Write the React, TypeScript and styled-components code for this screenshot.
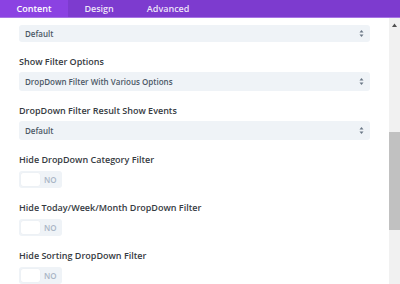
import styled, { createGlobalStyle } from 'styled-components';

const GlobalStyle = createGlobalStyle`
  html, body {
    margin: 0;
    padding: 0;
    background: #ffffff;
    font-family: "Open Sans", "Noto Sans", sans-serif;
  }
  #root {
    width: 400px;
    height: 284px;
    overflow: hidden;
  }
`;

const Frame = styled.div`
  display: flex;
  flex-direction: column;
  width: 400px;
  height: 284px;
`;

const TabBar = styled.div`
  display: flex;
  height: 17px;
  background-color: #7d3bcf;
  border-bottom: 1px solid #a774e4;
  flex-shrink: 0;
`;

const Tab = styled.div<{ $active?: boolean }>`
  display: flex;
  align-items: center;
  padding: 0 16.5px;
  font-size: 9px;
  font-weight: 600;
  color: ${({ $active }) => ($active ? '#ffffff' : 'rgba(255, 255, 255, 0.88)')};
  background-color: ${({ $active }) => ($active ? '#8b42e2' : 'transparent')};
`;

const Body = styled.div`
  display: flex;
  flex: 1;
  min-height: 0;
`;

const Panel = styled.div`
  flex: 1;
  display: flex;
  flex-direction: column;
  gap: 13px;
  padding: 7px 19px 0 19px;
`;

const Field = styled.div<{ $space: number }>`
  display: flex;
  flex-direction: column;
  gap: ${({ $space }) => $space}px;
`;

const Label = styled.div`
  font-size: 9px;
  font-weight: 600;
  line-height: 13px;
  color: #363b42;
  white-space: nowrap;
`;

const SelectBox = styled.div`
  display: flex;
  align-items: center;
  justify-content: space-between;
  height: 19px;
  padding: 0 6px 0 6px;
  background-color: #eff3f7;
  border-radius: 3px;
  font-size: 8px;
  font-weight: 600;
  color: #4c5866;
`;

const Toggle = styled.div`
  display: flex;
  align-items: center;
  gap: 4px;
  width: 43px;
  height: 17px;
  padding: 0 2px;
  box-sizing: border-box;
  background-color: #eff3f7;
  border-radius: 3px;
`;

const Knob = styled.div`
  width: 19px;
  height: 13px;
  background-color: #ffffff;
  border-radius: 2px;
  box-shadow: 0 0 1px rgba(0, 0, 0, 0.08);
`;

const ToggleText = styled.span`
  font-size: 8px;
  font-weight: 600;
  color: #a9b5c5;
`;

const ScrollBar = styled.div`
  width: 11px;
  background-color: #f1f1f1;
  display: flex;
  flex-direction: column;
  align-items: center;
  flex-shrink: 0;
`;

const ScrollArrow = styled.div`
  height: 11px;
  display: flex;
  align-items: center;
  justify-content: center;
  margin-top: 1px;
`;

const Thumb = styled.div`
  width: 11px;
  height: 98px;
  margin-top: 102px;
  background-color: #c1c1c1;
`;

const SelectArrows = () => (
  <svg width="5" height="9" viewBox="0 0 5 9">
    <path d="M0.5 3.5 L2.5 1 L4.5 3.5 Z" fill="#6b7785" />
    <path d="M0.5 5.5 L2.5 8 L4.5 5.5 Z" fill="#6b7785" />
  </svg>
);

const Select = ({ value }: { value: string }) => (
  <SelectBox>
    <span>{value}</span>
    <SelectArrows />
  </SelectBox>
);

const Switch = () => (
  <Toggle>
    <Knob />
    <ToggleText>NO</ToggleText>
  </Toggle>
);

const selects = [
  { label: 'Show Filter Options', value: 'DropDown Filter With Various Options' },
  { label: 'DropDown Filter Result Show Events', value: 'Default' },
];

const toggles = [
  'Hide DropDown Category Filter',
  'Hide Today/Week/Month DropDown Filter',
  'Hide Sorting DropDown Filter',
];

export default function App() {
  return (
    <>
      <GlobalStyle />
      <Frame>
        <TabBar>
          <Tab $active>Content</Tab>
          <Tab>Design</Tab>
          <Tab>Advanced</Tab>
        </TabBar>
        <Body>
          <Panel>
            <Select value="Default" />
            {selects.map((item) => (
              <Field key={item.label} $space={4}>
                <Label>{item.label}</Label>
                <Select value={item.value} />
              </Field>
            ))}
            {toggles.map((label) => (
              <Field key={label} $space={5}>
                <Label>{label}</Label>
                <Switch />
              </Field>
            ))}
          </Panel>
          <ScrollBar>
            <ScrollArrow>
              <svg width="5" height="4" viewBox="0 0 5 4">
                <path d="M0 4 L2.5 0.5 L5 4 Z" fill="#505050" />
              </svg>
            </ScrollArrow>
            <Thumb />
          </ScrollBar>
        </Body>
      </Frame>
    </>
  );
}
